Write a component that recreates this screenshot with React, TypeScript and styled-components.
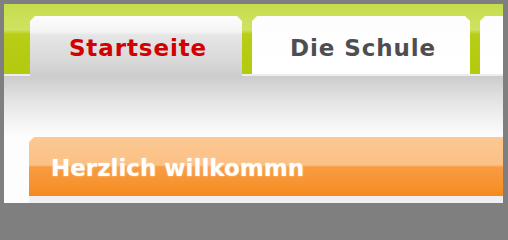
import styled, { createGlobalStyle } from 'styled-components'

const GlobalStyle = createGlobalStyle`
  html, body {
    margin: 0;
    padding: 0;
    background: #7f7f7f;
  }
  body {
    font-family: "DejaVu Sans", Verdana, sans-serif;
  }
`

const StyledFrame = styled.div`
  width: 508px;
  height: 208px;
  padding: 4px 5px 5px 4px;
  box-sizing: border-box;
  background: #7f7f7f;
`

const StyledPage = styled.div`
  width: 499px;
  height: 199px;
  display: flex;
  flex-direction: column;
  overflow: hidden;
  background: #ffffff;
`

const StyledTabBar = styled.nav`
  height: 58px;
  flex-shrink: 0;
  display: flex;
  align-items: flex-end;
  gap: 10px;
  padding: 12px 0 0 26px;
  background: linear-gradient(
    #c6dc4c 0,
    #d0e262 26px,
    #b8cd16 30px,
    #b3ca0e 100%
  );
  border-bottom: 2px solid #ececf2;
`

const StyledTab = styled.div<{ $active?: boolean; $width: number }>`
  width: ${p => p.$width}px;
  flex-shrink: 0;
  height: ${p => (p.$active ? 60 : 58)}px;
  margin-bottom: ${p => (p.$active ? -2 : 0)}px;
  display: flex;
  align-items: center;
  justify-content: center;
  padding: ${p => (p.$active ? '4px 0 0 4px' : '6px 0 0 4px')};
  box-sizing: border-box;
  clip-path: polygon(5px 0, calc(100% - 5px) 0, 100% 5px, 100% 100%, 0 100%, 0 5px);
  background: ${p =>
    p.$active
      ? 'linear-gradient(#fdfdfd 0, #f4f4f4 16px, #e6e6e6 19px, #d8d8d8 45px, #cdcdcd 100%)'
      : 'linear-gradient(#fdfdfd 0, #ffffff 100%)'};
  color: ${p => (p.$active ? '#d20000' : '#4e4e52')};
  font-size: 23px;
  font-weight: bold;
  letter-spacing: 0.9px;
  white-space: nowrap;
`

const StyledContent = styled.main`
  flex-grow: 1;
  padding: 61px 0 0 25px;
  background: linear-gradient(#cccccc 0, #e4e4e4 25px, #f6f6f6 50px, #fdfdfd 61px);
`

const StyledPanel = styled.section`
  display: flex;
  flex-direction: column;
`

const StyledPanelHeader = styled.h1`
  margin: 0;
  height: 59px;
  display: flex;
  align-items: center;
  padding: 2px 0 0 22px;
  box-sizing: border-box;
  clip-path: polygon(5px 0, 100% 0, 100% 100%, 0 100%, 0 5px);
  background: linear-gradient(
    #fcc893 0,
    #fbc185 28px,
    #f99b42 30px,
    #f7932f 48px,
    #f5891c 100%
  );
  color: #ffffff;
  font-size: 23px;
  font-weight: bold;
  text-shadow: 0 0 2px rgba(255, 220, 190, 0.9);
`

const StyledPanelBody = styled.div`
  height: 7px;
  background: #f0f0f2;
`

export default function App() {
  return (
    <>
      <GlobalStyle />
      <StyledFrame>
        <StyledPage>
          <StyledTabBar>
            <StyledTab $active $width={212}>Startseite</StyledTab>
            <StyledTab $width={218}>Die Schule</StyledTab>
            <StyledTab $width={218} aria-label="Weitere" />
          </StyledTabBar>
          <StyledContent>
            <StyledPanel>
              <StyledPanelHeader>Herzlich willkommn</StyledPanelHeader>
              <StyledPanelBody />
            </StyledPanel>
          </StyledContent>
        </StyledPage>
      </StyledFrame>
    </>
  )
}
